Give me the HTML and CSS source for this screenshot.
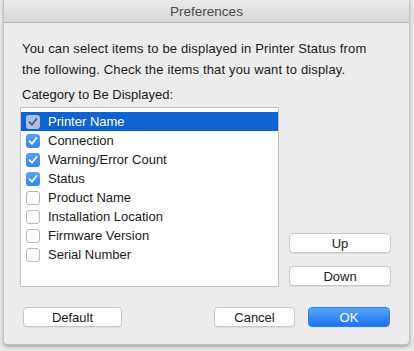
FILE: index.html
```html
<!DOCTYPE html>
<html>
<head>
<meta charset="utf-8">
<link rel="stylesheet" href="styles.css">
</head>
<body>
<div class="window">
  <div class="titlebar">Preferences</div>
  <div class="content">
    <p class="intro">You can select items to be displayed in Printer Status from<br>the following. Check the items that you want to display.</p>
    <div class="label">Category to Be Displayed:</div>
    <div class="main">
      <ul class="list">
        <li class="row selected"><span class="cb on"><svg viewBox="0 0 14 14"><path d="M3.5 7.2 L6 9.8 L10.6 3.8" /></svg></span>Printer Name</li>
        <li class="row"><span class="cb on"><svg viewBox="0 0 14 14"><path d="M3.5 7.2 L6 9.8 L10.6 3.8" /></svg></span>Connection</li>
        <li class="row"><span class="cb on"><svg viewBox="0 0 14 14"><path d="M3.5 7.2 L6 9.8 L10.6 3.8" /></svg></span>Warning/Error Count</li>
        <li class="row"><span class="cb on"><svg viewBox="0 0 14 14"><path d="M3.5 7.2 L6 9.8 L10.6 3.8" /></svg></span>Status</li>
        <li class="row"><span class="cb"></span>Product Name</li>
        <li class="row"><span class="cb"></span>Installation Location</li>
        <li class="row"><span class="cb"></span>Firmware Version</li>
        <li class="row"><span class="cb"></span>Serial Number</li>
      </ul>
      <div class="side">
        <button class="btn side-btn">Up</button>
        <button class="btn side-btn">Down</button>
      </div>
    </div>
    <div class="footer">
      <button class="btn default">Default</button>
      <div class="right">
        <button class="btn cancel">Cancel</button>
        <button class="btn ok">OK</button>
      </div>
    </div>
  </div>
</div>
</body>
</html>
```

FILE: styles.css
```css
html, body {
  margin: 0;
  padding: 0;
}
body {
  background: #e6e6e6;
  width: 414px;
  height: 351px;
  overflow: hidden;
  font-family: "Liberation Sans", Arial, sans-serif;
  font-size: 13px;
  color: #1a1a1a;
}
.window {
  margin: 0 4px 0 3px;
  height: 345px;
  background: #ececec;
  border: 1px solid #c4c4c4;
  border-top: none;
  border-radius: 0 0 5px 5px;
  box-shadow: 0 2px 3px rgba(0,0,0,0.25);
  box-sizing: border-box;
}
.titlebar {
  height: 22px;
  line-height: 23px;
  text-align: center;
  color: #4a4a4a;
  background: linear-gradient(#ebebeb, #d6d6d6);
  border-bottom: 1px solid #b3b3b3;
  font-size: 13.5px;
}
.content {
  padding: 15px 18px 0 18px;
}
.intro {
  margin: 0;
  line-height: 21px;
  letter-spacing: 0.15px;
  white-space: nowrap;
}
.label {
  margin-top: 5px;
  line-height: 19px;
}
.main {
  display: flex;
  margin-top: 3px;
  gap: 10px;
}
.list {
  list-style: none;
  margin: 0 0 0 -2px;
  padding: 4px 0 0 0;
  width: 259px;
  height: 180px;
  box-sizing: border-box;
  background: #fff;
  border: 1px solid #c2c2c2;
}
.row {
  display: flex;
  align-items: center;
  height: 19px;
  padding-left: 5px;
  gap: 8px;
  color: #1a1a1a;
}
.row.selected {
  background: #0f63d2;
  color: #fff;
}
.cb {
  width: 14px;
  height: 14px;
  box-sizing: border-box;
  border: 1px solid #b8b8b8;
  border-radius: 3px;
  background: #fff;
  display: flex;
  align-items: center;
  justify-content: center;
  flex: none;
}
.cb.on {
  border: none;
  background: linear-gradient(#5aa2f5, #2f86ef);
}
.cb svg {
  width: 14px;
  height: 14px;
}
.cb svg path {
  fill: none;
  stroke: #fff;
  stroke-width: 1.7;
  stroke-linecap: round;
  stroke-linejoin: round;
}
.selected .cb.on {
  background: #a9bfe3;
}
.selected .cb svg path {
  stroke: #4d5966;
}
.side {
  display: flex;
  flex-direction: column;
  justify-content: flex-end;
  gap: 13px;
  padding-bottom: 1px;
}
.btn {
  font-family: "Liberation Sans", Arial, sans-serif;
  font-size: 13px;
  color: #1a1a1a;
  background: #fff;
  border: 1px solid #c8c8c8;
  border-radius: 4px;
  height: 20px;
  padding: 0;
  box-shadow: 0 1px 0 rgba(0,0,0,0.06);
}
.side-btn {
  width: 102px;
}
.footer {
  display: flex;
  justify-content: space-between;
  margin-top: 20px;
  padding-right: 1px;
}
.default {
  width: 99px;
  margin-left: 1px;
}
.right {
  display: flex;
  gap: 13px;
}
.cancel {
  width: 81px;
}
.ok {
  width: 82px;
  color: #fff;
  border: 1px solid #2a7ef0;
  background: linear-gradient(#58a4f8, #1a74f0);
}
```
